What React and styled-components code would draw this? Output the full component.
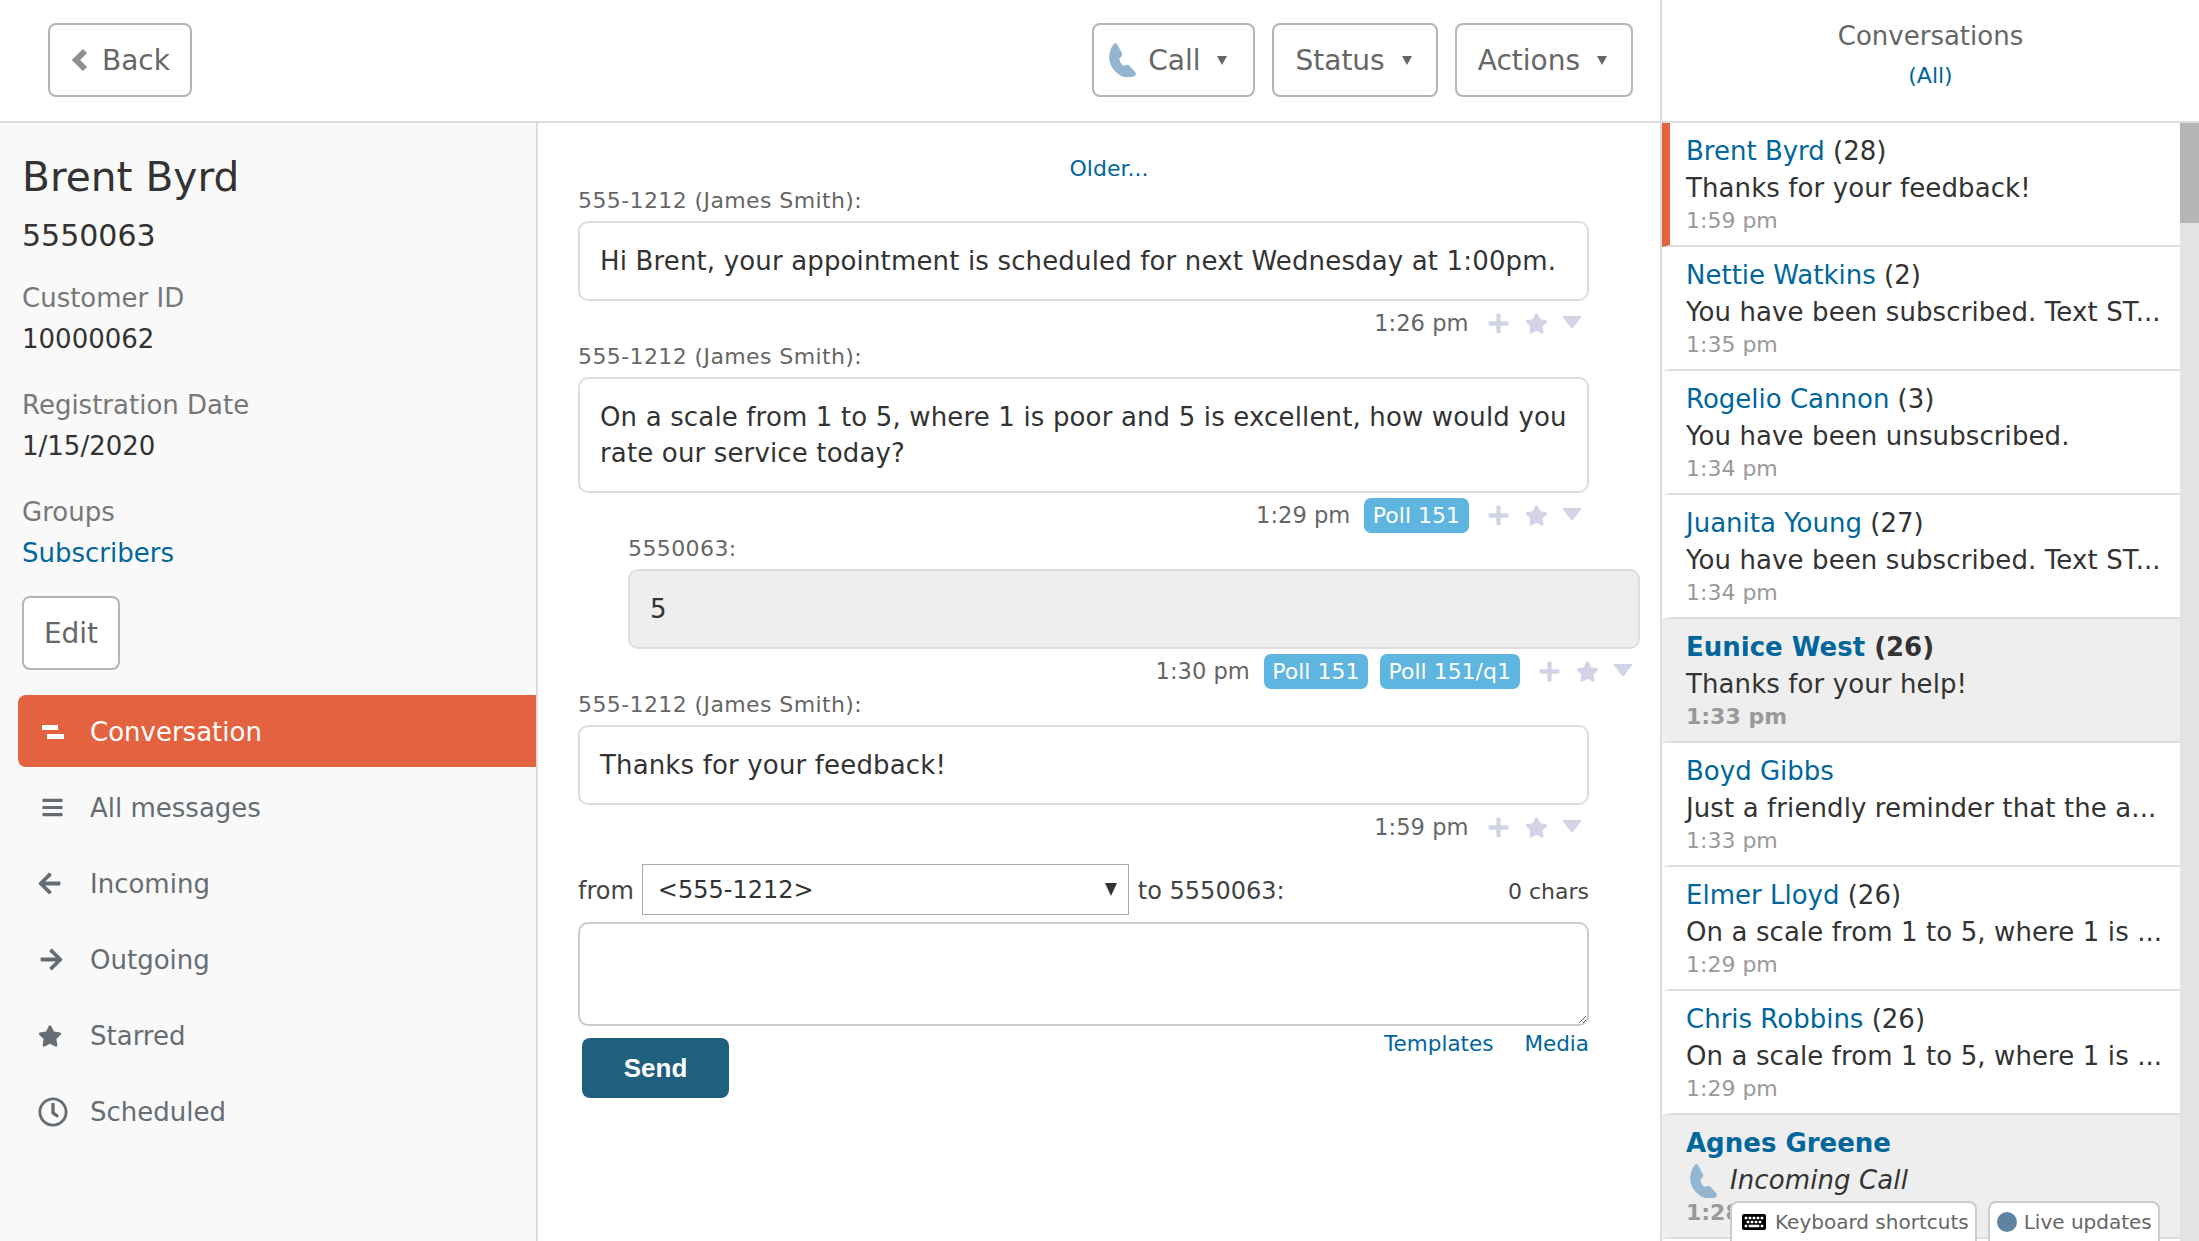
import React from 'react'
import styled, { createGlobalStyle } from 'styled-components'
import { FaArrowLeft, FaArrowRight, FaBars, FaStar, FaRegClock, FaKeyboard, FaPlus } from 'react-icons/fa'

const GlobalStyle = createGlobalStyle`
html, body { margin: 0; padding: 0; background: #ffffff; }
* { box-sizing: border-box; }
body { font-family: "DejaVu Sans", Verdana, sans-serif; color: #333333; overflow: hidden; }
`
const Page = styled.div`
display: flex;
width: 2199px;
height: 1241px;
overflow: hidden;
`
const Main = styled.div`
width: 1660px;
display: flex;
flex-direction: column;
`
const TopBar = styled.header`
height: 123px;
flex: none;
border-bottom: 2px solid #dddddd;
display: flex;
align-items: flex-start;
justify-content: space-between;
padding: 23px 27px 0 48px;
`
const TopActions = styled.div`
display: flex;
gap: 17px;
`
const Button = styled.button`
height: 74px;
background: #ffffff;
border: 2px solid #b5b5b5;
border-radius: 8px;
color: #666666;
font-family: inherit;
font-size: 28px;
padding: 0 ${p => p.$right || 20}px 0 ${p => p.$left || 20}px;
display: inline-flex;
align-items: center;
`
const BackSvg = styled.svg`
width: 18px;
height: 24px;
margin-right: 14px;
fill: none;
stroke: #8b9194;
stroke-width: 6;
`
const Caret = styled.span`
width: 0;
height: 0;
margin-left: 17px;
border-left: 5px solid transparent;
border-right: 5px solid transparent;
border-top: 9px solid #666666;
`
const Body = styled.div`
flex: 1;
display: flex;
min-height: 0;
`
const Sidebar = styled.aside`
width: 538px;
flex: none;
background: #f9f9f9;
border-right: 2px solid #dddddd;
padding-top: 29px;
`
const Profile = styled.div`
padding-left: 22px;
`
const Name = styled.h1`
margin: 0;
font-size: 40.7px;
font-weight: 400;
line-height: 50px;
`
const Phone = styled.div`
margin: 14px 0 24px;
font-size: 30px;
line-height: 40px;
`
const Field = styled.div`
margin-bottom: 30px;
`
const Label = styled.div`
color: #777777;
font-size: 26px;
line-height: 36px;
margin-bottom: 5px;
`
const Value = styled.div`
font-size: 26px;
line-height: 36px;
`
const Link = styled.a`
color: #00669c;
text-decoration: none;
cursor: pointer;
font-size: ${p => p.$size || 22}px;
`
const EditButton = styled(Button)`
width: 98px;
height: 74px;
margin-top: -5px;
justify-content: center;
padding: 0;
`
const Nav = styled.nav`
margin: 25px 0 0 18px;
`
const NavItem = styled.div`
height: 72px;
margin-bottom: 4px;
padding-top: 1px;
display: flex;
align-items: center;
border-radius: 8px 0 0 8px;
font-size: 26px;
color: ${p => (p.$active ? '#ffffff' : '#666d72')};
background: ${p => (p.$active ? '#e3623f' : 'transparent')};
`
const NavIcon = styled.span`
width: 72px;
padding-left: ${p => p.$pad}px;
flex: none;
display: flex;
align-items: center;
font-size: ${p => p.$size}px;
`
const ConvIcon = styled.span`
display: block;
width: 22px;
height: 14px;
background:
  linear-gradient(#fff, #fff) 0 0 / 16px 5px no-repeat,
  linear-gradient(#fff, #fff) 5px 9px / 17px 5px no-repeat;
`
const Center = styled.main`
flex: 1;
padding: 0 20px 0 40px;
min-width: 0;
`
const Older = styled.div`
padding-top: 31px;
text-align: center;
line-height: 30px;
`
const Message = styled.div`
margin: ${p => (p.$reply ? '1px 0 1px 50px' : '0 51px 0 0')};
`
const Sender = styled.div`
color: #666666;
font-size: 22px;
line-height: 30px;
letter-spacing: 0.4px;
margin-bottom: 5px;
`
const Bubble = styled.div`
border: 2px solid #dddddd;
border-radius: 10px;
background: ${p => (p.$reply ? '#eeeeee' : '#ffffff')};
padding: 20px;
font-size: 26px;
line-height: 36px;
letter-spacing: 0.15px;
`
const Meta = styled.div`
height: 36px;
margin: 4px 0 1px;
padding-right: 7px;
display: flex;
align-items: center;
justify-content: flex-end;
color: #666666;
font-size: 22.6px;
`
const Badge = styled.span`
height: 35px;
margin-left: ${p => p.$gap}px;
padding: 0 8.5px;
border-radius: 7px;
background: #5eb5e0;
color: #ffffff;
font-size: 22px;
line-height: 35px;
`
const MetaIcons = styled.span`
display: flex;
align-items: center;
margin-left: 18.5px;
gap: 14.5px;
color: #d3d3e8;
`
const PlusIcon = styled(FaPlus)`
font-size: 23px;
`
const StarIcon = styled(FaStar)`
font-size: 23px;
`
const DownIcon = styled.span`
width: 0;
height: 0;
margin-bottom: 2px;
border-left: 10px solid transparent;
border-right: 10px solid transparent;
border-top: 13px solid #d3d3e8;
`
const Composer = styled.div`
margin: 19px 51px 0 0;
`
const FromRow = styled.div`
display: flex;
align-items: center;
height: 51px;
padding-top: 3px;
font-size: 24px;
color: #444444;
`
const SelectWrap = styled.div`
position: relative;
margin: -3px 9px 0 8px;
`
const FromSelect = styled.select`
display: block;
appearance: none;
width: 487px;
height: 51px;
padding-left: 15px;
font-family: inherit;
font-size: 24px;
color: #333333;
background: #ffffff;
border: 1px solid #aaaaaa;
border-radius: 0;
`
const SelectArrow = styled.span`
position: absolute;
right: 12px;
top: 19px;
width: 0;
height: 0;
border-left: 6px solid transparent;
border-right: 6px solid transparent;
border-top: 13px solid #333333;
`
const Chars = styled.span`
margin-left: auto;
font-size: 22px;
`
const MessageBox = styled.textarea`
display: block;
width: 1011px;
height: 104px;
margin-top: 7px;
border: 2px solid #cccccc;
border-radius: 10px;
background: #ffffff;
outline: none;
`
const SendRow = styled.div`
display: flex;
justify-content: space-between;
align-items: flex-start;
margin-top: 12px;
padding-left: 4px;
`
const SendButton = styled.button`
width: 147px;
height: 60px;
border: none;
border-radius: 8px;
background: #20607f;
color: #ffffff;
font-family: "Liberation Sans", Arial, sans-serif;
font-size: 26px;
font-weight: 700;
`
const ComposerLinks = styled.div`
display: flex;
gap: 31px;
line-height: 24px;
margin-top: -6px;
`
const RightPanel = styled.section`
position: relative;
width: 539px;
flex: none;
border-left: 2px solid #dddddd;
display: flex;
flex-direction: column;
`
const RightHeader = styled.div`
height: 123px;
flex: none;
border-bottom: 2px solid #dddddd;
text-align: center;
padding-top: 16px;
`
const RightTitle = styled.div`
color: #666666;
font-size: 26px;
line-height: 40px;
margin-bottom: 7px;
`
const ListArea = styled.div`
flex: 1;
display: flex;
min-height: 0;
`
const List = styled.div`
flex: 1;
min-width: 0;
overflow: hidden;
`
const ConvRow = styled.div`
height: 124px;
padding: 10px 10px 0 16px;
border-bottom: 2px solid #dddddd;
background: ${p => (p.$unread ? '#eeeeee' : '#ffffff')};
border-left: 8px solid ${p => (p.$current ? '#e3623f' : 'transparent')};
font-weight: ${p => (p.$unread ? 700 : 400)};
`
const ConvName = styled.div`
font-size: 26px;
line-height: 37px;
white-space: nowrap;
`
const ConvPreview = styled.div`
font-size: 26px;
line-height: 37px;
font-weight: 400;
letter-spacing: 0.1px;
white-space: nowrap;
font-style: ${p => (p.$italic ? 'italic' : 'normal')};
display: ${p => (p.$italic ? 'flex' : 'block')};
align-items: center;
gap: 8px;
`
const ConvTime = styled.div`
color: #999999;
font-size: 22px;
line-height: 28px;
`
const Scrollbar = styled.div`
width: 19px;
flex: none;
background: #e3e3e3;
`
const Thumb = styled.div`
height: 100px;
background: #b5b5b5;
`
const BottomTabs = styled.div`
position: absolute;
left: 68px;
bottom: -2px;
display: flex;
gap: 11px;
`
const Tab = styled.div`
height: 42px;
padding: 0 6px 0 ${p => p.$left}px;
display: flex;
align-items: center;
gap: ${p => p.$gap}px;
background: #ffffff;
border: 2px solid #cccccc;
border-radius: 8px 8px 0 0;
color: #666666;
font-size: 20px;
`
const LiveDot = styled.span`
width: 20px;
height: 20px;
border-radius: 50%;
background: #5f83a0;
`
const KeyIcon = styled(FaKeyboard)`
color: #000000;
font-size: 24px;
`
const PhoneSvg = styled.svg`
flex: none;
fill: #93b5d0;
stroke: #93b5d0;
stroke-width: 1.2;
width: ${p => p.$size}px;
height: ${p => p.$size}px;
margin: 0 ${p => p.$mr || 0}px 0 ${p => p.$ml || 0}px;
`

function PhoneIcon({ size, mr, ml }) {
  return (
    <PhoneSvg $size={size} $mr={mr} $ml={ml} viewBox="0 0 24 24">
      <path d="M6.5 1 L10 7.5 C10.3 8.3 10 9 9.3 9.6 L8 10.6 C8.3 13 10 15.8 12 17 L13.5 16.2 C14.3 15.8 15 16 15.5 16.7 L19.5 21 C20 21.8 19.8 22.6 19 23 C16 24.5 12 24 8.5 21.5 C3.5 18 1 12.5 2.5 7 C3 4.5 4 2.5 5 1.2 C5.5 .7 6.2 .6 6.5 1 Z" />
    </PhoneSvg>
  )
}

const navItems = [
  { label: 'Conversation', active: true, icon: <ConvIcon />, size: 22, pad: 24 },
  { label: 'All messages', icon: <FaBars />, size: 23, pad: 23 },
  { label: 'Incoming', icon: <FaArrowLeft />, size: 25, pad: 19 },
  { label: 'Outgoing', icon: <FaArrowRight />, size: 25, pad: 21 },
  { label: 'Starred', icon: <FaStar />, size: 24, pad: 20 },
  { label: 'Scheduled', icon: <FaRegClock />, size: 30, pad: 20 },
]

const messages = [
  { sender: '555-1212 (James Smith):', text: 'Hi Brent, your appointment is scheduled for next Wednesday at 1:00pm.', time: '1:26 pm' },
  { sender: '555-1212 (James Smith):', text: 'On a scale from 1 to 5, where 1 is poor and 5 is excellent, how would you rate our service today?', time: '1:29 pm', badges: ['Poll 151'] },
  { sender: '5550063:', text: '5', time: '1:30 pm', reply: true, badges: ['Poll 151', 'Poll 151/q1'] },
  { sender: '555-1212 (James Smith):', text: 'Thanks for your feedback!', time: '1:59 pm' },
]

const conversations = [
  { name: 'Brent Byrd', count: 28, text: 'Thanks for your feedback!', time: '1:59 pm', current: true },
  { name: 'Nettie Watkins', count: 2, text: 'You have been subscribed. Text ST...', time: '1:35 pm' },
  { name: 'Rogelio Cannon', count: 3, text: 'You have been unsubscribed.', time: '1:34 pm' },
  { name: 'Juanita Young', count: 27, text: 'You have been subscribed. Text ST...', time: '1:34 pm' },
  { name: 'Eunice West', count: 26, text: 'Thanks for your help!', time: '1:33 pm', unread: true },
  { name: 'Boyd Gibbs', text: 'Just a friendly reminder that the a...', time: '1:33 pm' },
  { name: 'Elmer Lloyd', count: 26, text: 'On a scale from 1 to 5, where 1 is ...', time: '1:29 pm' },
  { name: 'Chris Robbins', count: 26, text: 'On a scale from 1 to 5, where 1 is ...', time: '1:29 pm' },
  { name: 'Agnes Greene', call: true, time: '1:28 pm', unread: true },
]

export default function App() {
  return (
    <Page>
      <GlobalStyle />
      <Main>
        <TopBar>
          <Button>
            <BackSvg viewBox="0 0 18 24"><polyline points="15,3 6,12 15,21" /></BackSvg>
            Back
          </Button>
          <TopActions>
            <Button $left={13} $right={26}><PhoneIcon size={34} mr={7} />Call<Caret /></Button>
            <Button $left={21} $right={24}>Status<Caret /></Button>
            <Button $left={21} $right={24}>Actions<Caret /></Button>
          </TopActions>
        </TopBar>
        <Body>
          <Sidebar>
            <Profile>
              <Name>Brent Byrd</Name>
              <Phone>5550063</Phone>
              <Field><Label>Customer ID</Label><Value>10000062</Value></Field>
              <Field><Label>Registration Date</Label><Value>1/15/2020</Value></Field>
              <Field><Label>Groups</Label><Value><Link $size={26}>Subscribers</Link></Value></Field>
              <EditButton>Edit</EditButton>
            </Profile>
            <Nav>
              {navItems.map(item => (
                <NavItem key={item.label} $active={item.active}>
                  <NavIcon $size={item.size} $pad={item.pad}>{item.icon}</NavIcon>
                  {item.label}
                </NavItem>
              ))}
            </Nav>
          </Sidebar>
          <Center>
            <Older><Link>Older...</Link></Older>
            {messages.map((m, i) => (
              <Message key={i} $reply={m.reply}>
                <Sender>{m.sender}</Sender>
                <Bubble $reply={m.reply}>{m.text}</Bubble>
                <Meta>
                  {m.time}
                  {m.badges && m.badges.map((b, j) => <Badge key={b} $gap={j === 0 ? 14 : 12}>{b}</Badge>)}
                  <MetaIcons><PlusIcon /><StarIcon /><DownIcon /></MetaIcons>
                </Meta>
              </Message>
            ))}
            <Composer>
              <FromRow>
                from
                <SelectWrap>
                  <FromSelect defaultValue="1"><option value="1">{'<555-1212>'}</option></FromSelect>
                  <SelectArrow />
                </SelectWrap>
                to 5550063:
                <Chars>0 chars</Chars>
              </FromRow>
              <MessageBox />
              <SendRow>
                <SendButton>Send</SendButton>
                <ComposerLinks><Link $size={21.5}>Templates</Link><Link $size={21.5}>Media</Link></ComposerLinks>
              </SendRow>
            </Composer>
          </Center>
        </Body>
      </Main>
      <RightPanel>
        <RightHeader>
          <RightTitle>Conversations</RightTitle>
          <Link>(All)</Link>
        </RightHeader>
        <ListArea>
          <List>
            {conversations.map(c => (
              <ConvRow key={c.name} $current={c.current} $unread={c.unread}>
                <ConvName>
                  <Link $size={26}>{c.name}</Link>{c.count ? ` (${c.count})` : ''}
                </ConvName>
                {c.call
                  ? <ConvPreview $italic><PhoneIcon size={34} ml={2} />Incoming Call</ConvPreview>
                  : <ConvPreview>{c.text}</ConvPreview>}
                <ConvTime>{c.time}</ConvTime>
              </ConvRow>
            ))}
          </List>
          <Scrollbar><Thumb /></Scrollbar>
        </ListArea>
        <BottomTabs>
          <Tab $left={10} $gap={9}><KeyIcon />Keyboard shortcuts</Tab>
          <Tab $left={7} $gap={7}><LiveDot />Live updates</Tab>
        </BottomTabs>
      </RightPanel>
    </Page>
  )
}
